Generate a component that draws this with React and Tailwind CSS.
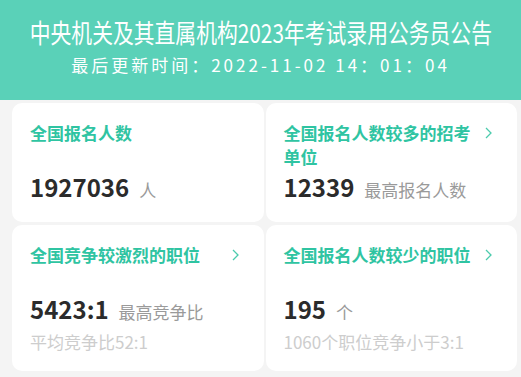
import React from 'react';

const font = 'font-["Noto_Sans_CJK_SC",sans-serif]';

const cards = [
  { title: '全国报名人数', value: '1927036', unit: '人' },
  { title: '全国报名人数较多的招考单位', value: '12339', unit: '最高报名人数', arrow: true },
  { title: '全国竞争较激烈的职位', value: '5423:1', unit: '最高竞争比', note: '平均竞争比52:1', arrow: true },
  { title: '全国报名人数较少的职位', value: '195', unit: '个', note: '1060个职位竞争小于3:1', arrow: true },
];

const Chevron = () => (
  <svg width="9" height="14" viewBox="0 0 9 14" className="mt-[5px] shrink-0">
    <polyline points="2,2 7,7 2,12" fill="none" stroke="#4ccbad" strokeWidth="1.3" />
  </svg>
);

const Card = ({ title, value, unit, note, arrow }) => (
  <div className="bg-white rounded-[10px] pt-[18px] pb-[17px] pl-[18px] pr-[24px]">
    <div className="flex justify-between items-start gap-2 min-h-[48px]">
      <p className="text-[17px] leading-[24px] font-bold text-[#2fc4a2]">{title}</p>
      {arrow && <Chevron />}
    </div>
    <div className="flex items-baseline h-[36px] leading-[36px]">
      <span className="text-[24px] font-bold text-[#2b2b2b]">{value}</span>
      <span className="ml-[10px] text-[17px] text-[#9a9a9a]">{unit}</span>
    </div>
    {note && (
      <p className="mt-[3px] text-[17px] leading-[24px] text-[#cdcdcd]">{note}</p>
    )}
  </div>
);

export default function App() {
  return (
    <div className={`${font} w-[521px] h-[377px] bg-[#f4f4f4] overflow-hidden`}>
      {/* Header */}
      <header className="h-[100px] bg-[#5ad1b8] flex flex-col items-center text-white">
        <h1 className="mt-[17px] text-[26px] leading-[30px] whitespace-nowrap scale-x-[0.8]">
          中央机关及其直属机构2023年考试录用公务员公告
        </h1>
        <p className="mt-[7px] text-[17px] leading-[22px] tracking-[3px] whitespace-pre">
          最后更新时间：2022-11-02 14：01：04
        </p>
      </header>

      {/* Stats */}
      <div className="pt-[3px] pl-[12px] pr-[4px] grid grid-cols-2 gap-x-[2px] gap-y-[3px]">
        {cards.map((c) => (
          <Card key={c.title} {...c} />
        ))}
      </div>
    </div>
  );
}
